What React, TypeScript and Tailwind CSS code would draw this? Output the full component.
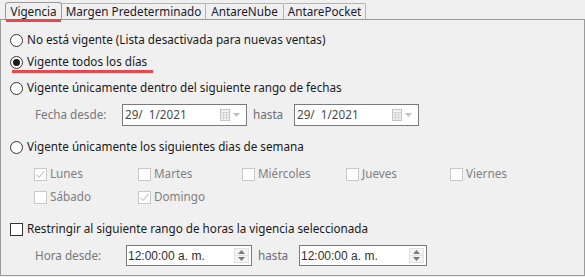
import React from "react";

function Radio({ checked }: { checked?: boolean }) {
  return (
    <span className="flex h-[13px] w-[13px] shrink-0 items-center justify-center rounded-full border border-[#333] bg-white">
      {checked && <span className="h-[7px] w-[7px] rounded-full bg-[#1a1a1a]" />}
    </span>
  );
}

function Check({ checked, disabled }: { checked?: boolean; disabled?: boolean }) {
  return (
    <span
      className={
        disabled
          ? "flex h-[13px] w-[13px] shrink-0 items-center justify-center border border-[#c8c8c8] bg-white"
          : "flex h-[13px] w-[13px] shrink-0 items-center justify-center border border-[#333] bg-white"
      }
    >
      {checked && (
        <svg width="11" height="11" viewBox="0 0 11 11">
          <path d="M1.5 5.5 L4 8.5 L9.5 2" fill="none" stroke="#b4b4b4" strokeWidth="1" />
        </svg>
      )}
    </span>
  );
}

function DateBox() {
  return (
    <div className="flex h-[22px] w-[125px] items-center border border-[#7a7a7a] bg-white pl-[2px] pr-[6px]">
      <span className="flex-1 text-[#4a4a4a]">29/&nbsp; 1/2021</span>
      <svg width="10" height="12" viewBox="0 0 10 12" className="mr-[3px]">
        <rect x="0.5" y="0.5" width="9" height="11" fill="#f4f4f4" stroke="#c4c4c4" />
        <path d="M0.5 3.5 H9.5 M0.5 6 H9.5 M0.5 8.5 H9.5 M3.5 3.5 V11.5 M6.5 3.5 V11.5" stroke="#d4d4d4" />
      </svg>
      <svg width="7" height="4" viewBox="0 0 7 4">
        <path d="M0 0 H7 L3.5 4 Z" fill="#c0c0c0" />
      </svg>
    </div>
  );
}

function TimeBox({ w }: { w: string }) {
  return (
    <div className={`flex h-[21px] items-center border border-[#7a7a7a] bg-white pl-[1px] pr-[2px] ${w}`}>
      <span className="flex-1 font-['Liberation_Sans',sans-serif] text-[12px] text-[#2f2f2f]">12:00:00 a. m.</span>
      <div className="flex h-[15px] w-[15px] flex-col border border-[#e2e2e2] bg-[#f4f4f4]">
        <div className="flex flex-1 items-center justify-center border-b border-[#e2e2e2]">
          <svg width="7" height="4" viewBox="0 0 7 4">
            <path d="M0 4 H7 L3.5 0 Z" fill="#7a7a7a" />
          </svg>
        </div>
        <div className="flex flex-1 items-center justify-center">
          <svg width="7" height="4" viewBox="0 0 7 4">
            <path d="M0 0 H7 L3.5 4 Z" fill="#7a7a7a" />
          </svg>
        </div>
      </div>
    </div>
  );
}

const days = [
  { name: "Lunes", checked: true },
  { name: "Martes" },
  { name: "Miércoles" },
  { name: "Jueves" },
  { name: "Viernes" },
];

export default function App() {
  return (
    <div className="relative h-[277px] w-[585px] overflow-hidden bg-[#f0f0f0] font-['Segoe_UI','Noto_Sans',sans-serif] text-[11.7px] leading-none text-[#1a1a1a]">
      {/* tabs */}
      <div className="flex h-[19px] items-end pl-[5px]">
        <div className="relative z-10 -mb-px flex h-[18px] w-[57px] items-center justify-center rounded-t-[3px] border-x border-t border-[#9a9a9a] bg-[#f0f0f0]">
          Vigencia
        </div>
        <div className="flex h-[16px] w-[144px] items-center justify-center rounded-tr-[2px] border-r border-t border-[#b4b4b4] text-[#1c1830]">
          Margen Predeterminado
        </div>
        <div className="flex h-[16px] w-[78px] items-center justify-center rounded-tr-[2px] border-r border-t border-[#b4b4b4] text-[#1c1830]">
          AntareNube
        </div>
        <div className="flex h-[16px] w-[82px] items-center justify-center rounded-tr-[2px] border-r border-t border-[#b4b4b4] text-[#1c1830]">
          AntarePocket
        </div>
      </div>

      {/* panel */}
      <div className="h-[257px] border border-[#9a9a9a] pt-[9px]">
        <div className="flex h-[22px] items-center gap-[4px] pl-[9px]">
          <Radio />
          <span>No está vigente (Lista desactivada para nuevas ventas)</span>
        </div>
        <div className="flex h-[22px] items-center gap-[4px] pl-[9px]">
          <Radio checked />
          <span>Vigente todos los días</span>
        </div>
        <div className="mt-[4px] flex h-[22px] items-center gap-[4px] pl-[9px]">
          <Radio />
          <span>Vigente únicamente dentro del siguiente rango de fechas</span>
        </div>
        <div className="mt-[5px] flex h-[22px] items-center pl-[34px] text-[#777]">
          <span className="w-[87px]">Fecha desde:</span>
          <DateBox />
          <span className="w-[47px] pl-[6px] text-[#6c6a7a]">hasta</span>
          <DateBox />
        </div>
        <div className="mt-[10px] flex h-[22px] items-center gap-[4px] pl-[9px]">
          <Radio />
          <span>Vigente únicamente los siguientes dias de semana</span>
        </div>
        <div className="mt-[5px] flex h-[22px] items-center pl-[33px] text-[#808080]">
          {days.map((d) => (
            <div key={d.name} className="flex w-[104px] items-center gap-[3px]">
              <Check disabled checked={d.checked} />
              <span>{d.name}</span>
            </div>
          ))}
        </div>
        <div className="mt-[1px] flex h-[22px] items-center pl-[33px] text-[#808080]">
          <div className="flex w-[104px] items-center gap-[3px]">
            <Check disabled />
            <span>Sábado</span>
          </div>
          <div className="flex w-[104px] items-center gap-[3px]">
            <Check disabled checked />
            <span>Domingo</span>
          </div>
        </div>
        <div className="mt-[10px] flex h-[22px] items-center gap-[4px] pl-[9px]">
          <Check />
          <span>Restringir al siguiente rango de horas la vigencia seleccionada</span>
        </div>
        <div className="mt-[5px] flex h-[21px] items-center pl-[34px] text-[#777]">
          <span className="w-[91px]">Hora desde:</span>
          <TimeBox w="w-[126px]" />
          <span className="w-[47px] pl-[6px] text-[#6c6a7a]">hasta</span>
          <TimeBox w="w-[128px]" />
        </div>
      </div>

      {/* red annotation marks */}
      <div className="absolute left-[6px] top-[19px] z-20 h-[3px] w-[55px] bg-[#e5484d]" />
      <div className="absolute left-[12px] top-[70px] z-20 h-[3px] w-[141px] bg-[#e5484d]" />
    </div>
  );
}
